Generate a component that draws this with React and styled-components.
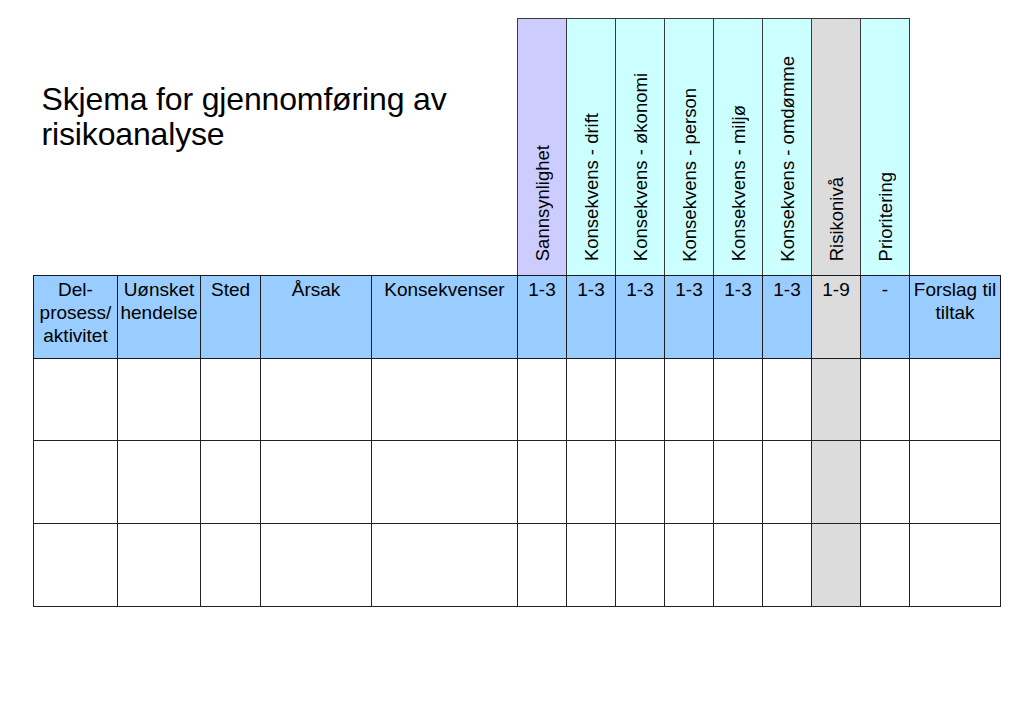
import React from "react";
import styled, { createGlobalStyle } from "styled-components";

const GlobalStyle = createGlobalStyle`
  html, body {
    margin: 0;
    padding: 0;
    background: #ffffff;
  }
  body {
    font-family: "Liberation Sans", Arial, sans-serif;
    color: #000000;
  }
`;

const COLS = [84, 83, 60, 111, 146, 49, 49, 49, 49, 49, 49, 49, 49, 91];

const TONES = {
  lavender: "#ccccff",
  cyan: "#ccffff",
  gray: "#dcdcdc",
  blue: "#99ccff",
  white: "#ffffff",
};

const rotated = [
  { label: "Sannsynlighet", tone: "lavender" },
  { label: "Konsekvens - drift", tone: "cyan" },
  { label: "Konsekvens - økonomi", tone: "cyan" },
  { label: "Konsekvens - person", tone: "cyan" },
  { label: "Konsekvens - miljø", tone: "cyan" },
  { label: "Konsekvens - omdømme", tone: "cyan" },
  { label: "Risikonivå", tone: "gray" },
  { label: "Prioritering", tone: "cyan" },
];

const heading = [
  { label: ["Del-", "prosess/", "aktivitet"] },
  { label: ["Uønsket", "hendelse"] },
  { label: ["Sted"] },
  { label: ["Årsak"] },
  { label: ["Konsekvenser"] },
  { label: ["1-3"] },
  { label: ["1-3"] },
  { label: ["1-3"] },
  { label: ["1-3"] },
  { label: ["1-3"] },
  { label: ["1-3"] },
  { label: ["1-9"], tone: "gray" },
  { label: ["-"] },
  { label: ["Forslag til", "tiltak"] },
];

const RISK_COL = 11;

export default function App() {
  return (
    <Page>
      <GlobalStyle />
      <Sheet>
        <colgroup>
          {COLS.map((w, i) => (
            <col key={i} style={{ width: w }} />
          ))}
        </colgroup>
        <tbody>
          <tr>
            <TitleCell colSpan={5}>
              <Title>
                Skjema for gjennomføring av
                <br />
                risikoanalyse
              </Title>
            </TitleCell>
            {rotated.map((c) => (
              <RotatedCell key={c.label} $tone={c.tone}>
                <Vertical>{c.label}</Vertical>
              </RotatedCell>
            ))}
            <BlankCell />
          </tr>
          <tr>
            {heading.map((c, i) => (
              <HeadCell key={i} $tone={c.tone || "blue"}>
                {c.label.map((line, j) => (
                  <React.Fragment key={j}>
                    {j > 0 && <br />}
                    {line}
                  </React.Fragment>
                ))}
              </HeadCell>
            ))}
          </tr>
          {[0, 1, 2].map((r) => (
            <tr key={r}>
              {COLS.map((_, i) => (
                <BodyCell
                  key={i}
                  $tone={i === RISK_COL ? "gray" : "white"}
                  $tall={r > 0}
                />
              ))}
            </tr>
          ))}
        </tbody>
      </Sheet>
    </Page>
  );
}

const Page = styled.div`
  width: 1020px;
  height: 718px;
  padding: 18px 0 0 33px;
  box-sizing: border-box;
`;

const Sheet = styled.table`
  border-collapse: collapse;
  table-layout: fixed;
  width: 968px;
`;

const TitleCell = styled.td`
  border: none;
  padding: 63px 0 0 8px;
  vertical-align: top;
  height: 193px;
`;

const Title = styled.div`
  font-size: 32px;
  line-height: 35px;
  font-weight: 400;
  letter-spacing: -0.15px;
`;

const RotatedCell = styled.td`
  border: 1px solid #3a3a3a;
  border-bottom-color: #1a1a1a;
  background: ${(p) => TONES[p.$tone]};
  vertical-align: bottom;
  text-align: center;
  padding: 0 0 9px;
`;

const Vertical = styled.span`
  display: inline-block;
  writing-mode: vertical-rl;
  transform: rotate(180deg);
  font-size: 18.5px;
  line-height: 21px;
  white-space: nowrap;
`;

const BlankCell = styled.td`
  border: none;
`;

const HeadCell = styled.td`
  border: 1px solid #1a1a1a;
  background: ${(p) => TONES[p.$tone]};
  vertical-align: top;
  text-align: center;
  font-size: 19px;
  line-height: 23px;
  padding: 2px 0 0;
  height: 80px;
  white-space: nowrap;
`;

const BodyCell = styled.td`
  border: 1px solid #222222;
  background: ${(p) => TONES[p.$tone]};
  height: ${(p) => (p.$tall ? 82 : 81)}px;
  padding: 0;
`;
